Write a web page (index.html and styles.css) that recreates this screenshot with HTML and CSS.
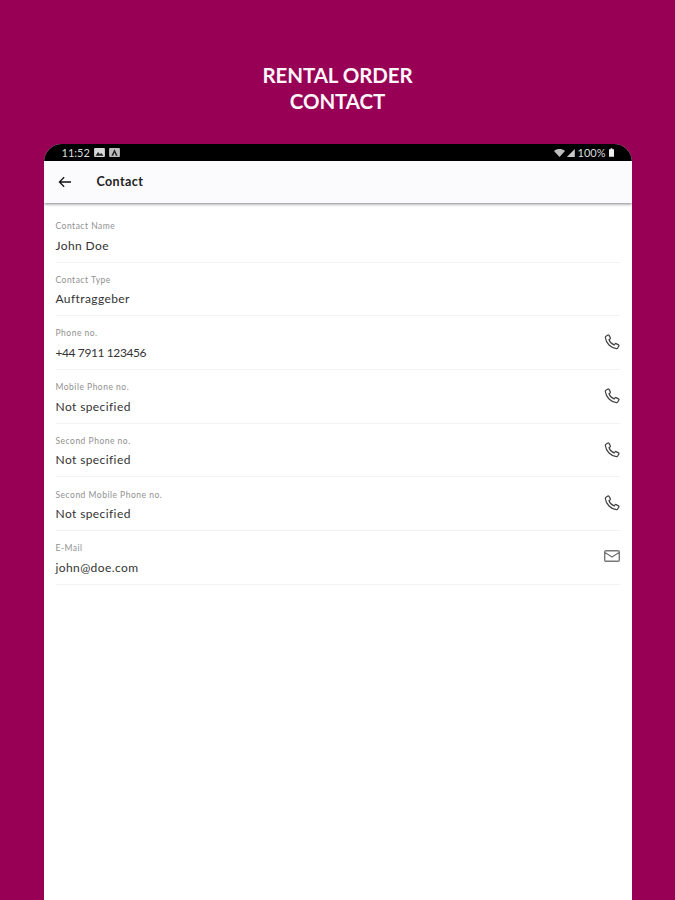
FILE: index.html
```html
<!DOCTYPE html>
<html lang="en">
<head>
<meta charset="utf-8">
<title>Rental Order Contact</title>
<link rel="stylesheet" href="styles.css">
</head>
<body>
<svg class="sprites" width="0" height="0" aria-hidden="true">
  <symbol id="phone" viewBox="0 0 18 18">
    <path d="M2.2 2.6 4.4 1.2c.5-.3 1-.1 1.3.4l1.4 2.7c.2.5.1.9-.3 1.2L5.6 6.4c.8 2.6 3 4.9 5.8 5.9l1-1.2c.3-.4.8-.5 1.2-.3l2.7 1.4c.5.3.7.8.4 1.3l-1.3 2.2c-.3.5-.8.8-1.400.7C7.700 15.800 2.200 10.300 1.500 4c-.1-.6.200-1.100.7-1.400Z"/>
  </symbol>
</svg>
<h1 class="headline">RENTAL ORDER<br>CONTACT</h1>
<main class="device">
  <div class="status">
    <div class="status-group">
      <span>11:52</span>
      <svg class="status-icon" viewBox="0 0 12 10"><rect width="12" height="10" rx="1" fill="#d8d8d8"/><path d="M1.500 8.500 4.500 4.500l2 2.500 1.500-1.500 2.500 3Z" fill="#222"/></svg>
      <svg class="status-icon" viewBox="0 0 12 10"><rect width="12" height="10" rx="1" fill="#bdbdbd"/><path d="M6 1.500 9.500 8.500h-2L6 5 4.500 8.500h-2Z" fill="#222"/></svg>
    </div>
    <div class="status-group status-right">
      <svg class="wifi" viewBox="0 0 14 10"><path d="M0 2.500C4-.8 10-.8 14 2.500L7 10Z" fill="#bdbdbd"/></svg>
      <svg class="signal" viewBox="0 0 12 10"><path d="M12 0v10H2Z" fill="#c8c8c8"/></svg>
      <span>100%</span>
      <svg class="battery" viewBox="0 0 6 10"><path d="M2 0h2v1h2v9H0V1h2Z" fill="#eee"/></svg>
    </div>
  </div>
  <header class="appbar">
    <svg class="back" viewBox="0 0 16 14"><path d="M15 7H2M7 1.500 1.500 7 7 12.500"/></svg>
    <span class="appbar-title">Contact</span>
  </header>
  <section class="list">
    <div class="row"><div class="field"><span class="label">Contact Name</span><span class="value">John Doe</span></div></div>
    <div class="row"><div class="field"><span class="label">Contact Type</span><span class="value">Auftraggeber</span></div></div>
    <div class="row"><div class="field"><span class="label">Phone no.</span><span class="value value-num">+44 7911 123456</span></div><svg class="action"><use href="#phone"/></svg></div>
    <div class="row"><div class="field"><span class="label">Mobile Phone no.</span><span class="value">Not specified</span></div><svg class="action"><use href="#phone"/></svg></div>
    <div class="row"><div class="field"><span class="label">Second Phone no.</span><span class="value">Not specified</span></div><svg class="action"><use href="#phone"/></svg></div>
    <div class="row"><div class="field"><span class="label">Second Mobile Phone no.</span><span class="value">Not specified</span></div><svg class="action"><use href="#phone"/></svg></div>
    <div class="row"><div class="field"><span class="label">E-Mail</span><span class="value">john@doe.com</span></div>
      <svg class="action mail" viewBox="0 0 16 12"><path d="M2 .7h12c.7 0 1.300.6 1.300 1.300v8c0 .7-.6 1.300-1.300 1.300H2C1.300 11.300.7 10.700.7 10V2C.7 1.300 1.300.7 2 .7ZM1 2.500 8 7l7-4.500"/></svg>
    </div>
  </section>
</main>
</body>
</html>
```
FILE: styles.css
```css
* { box-sizing: border-box; }
html, body { height: 900px; overflow: hidden; }
body {
  margin: 0;
  background: #970054;
  font-family: "Lato", "Noto Sans", sans-serif;
  display: flex;
  flex-direction: column;
  align-items: center;
}
.sprites { position: absolute; }
.headline {
  margin: 0;
  padding-top: 62px;
  height: 144px;
  width: 100%;
  color: #fdf5f9;
  font-size: 20.500px;
  line-height: 26px;
  font-weight: 700;
  text-align: center;
  letter-spacing: -0.1px;
}
.device {
  width: 588px;
  height: 756px;
  background: #fff;
  border-radius: 18px 18px 0 0;
  overflow: hidden;
  flex: none;
}
.status {
  height: 17px;
  background: #000;
  color: #dcdcdc;
  font-size: 11px;
  display: flex;
  justify-content: space-between;
  align-items: center;
  padding: 0 18px 0 18px;
}
.status-group { display: flex; align-items: center; gap: 3px; }
.status-right { gap: 0; }
.status-icon { width: 11px; height: 9px; margin-left: 1px; }
.wifi { width: 11px; height: 8px; }
.signal { width: 10px; height: 8px; margin-right: 3px; }
.battery { width: 5px; height: 9px; margin-left: 3px; }
.appbar {
  height: 42px;
  background: #fbfafd;
  display: flex;
  align-items: center;
  padding-left: 14px;
  box-shadow: 0 1px 3px rgba(0, 0, 0, .5);
  position: relative;
}
.back { width: 14px; height: 12px; fill: none; stroke: #111; stroke-width: 1.500; }
.appbar-title { margin-left: 25px; margin-top: -1px; font-size: 12.500px; font-weight: 700; color: #222; letter-spacing: .4px; }
.list { padding: 6px 12px 0; }
.row {
  height: 53.700px;
  border-bottom: 1px solid #f2f2f2;
  display: flex;
  justify-content: space-between;
  align-items: center;
}
.field { display: flex; flex-direction: column; padding-top: 3px; }
.label { font-size: 8.500px; line-height: 10px; color: #909090; letter-spacing: .5px; }
.value { margin-top: 6.500px; font-size: 12px; line-height: 15px; color: #333; letter-spacing: .4px; }
.value-num { letter-spacing: -.4px; }
.action {
  width: 16px;
  height: 16px;
  margin-bottom: 1px;
  fill: none;
  stroke: #444;
  stroke-width: 1.400;
}
.mail { height: 12px; stroke: #777; margin-bottom: 3px; }
```
